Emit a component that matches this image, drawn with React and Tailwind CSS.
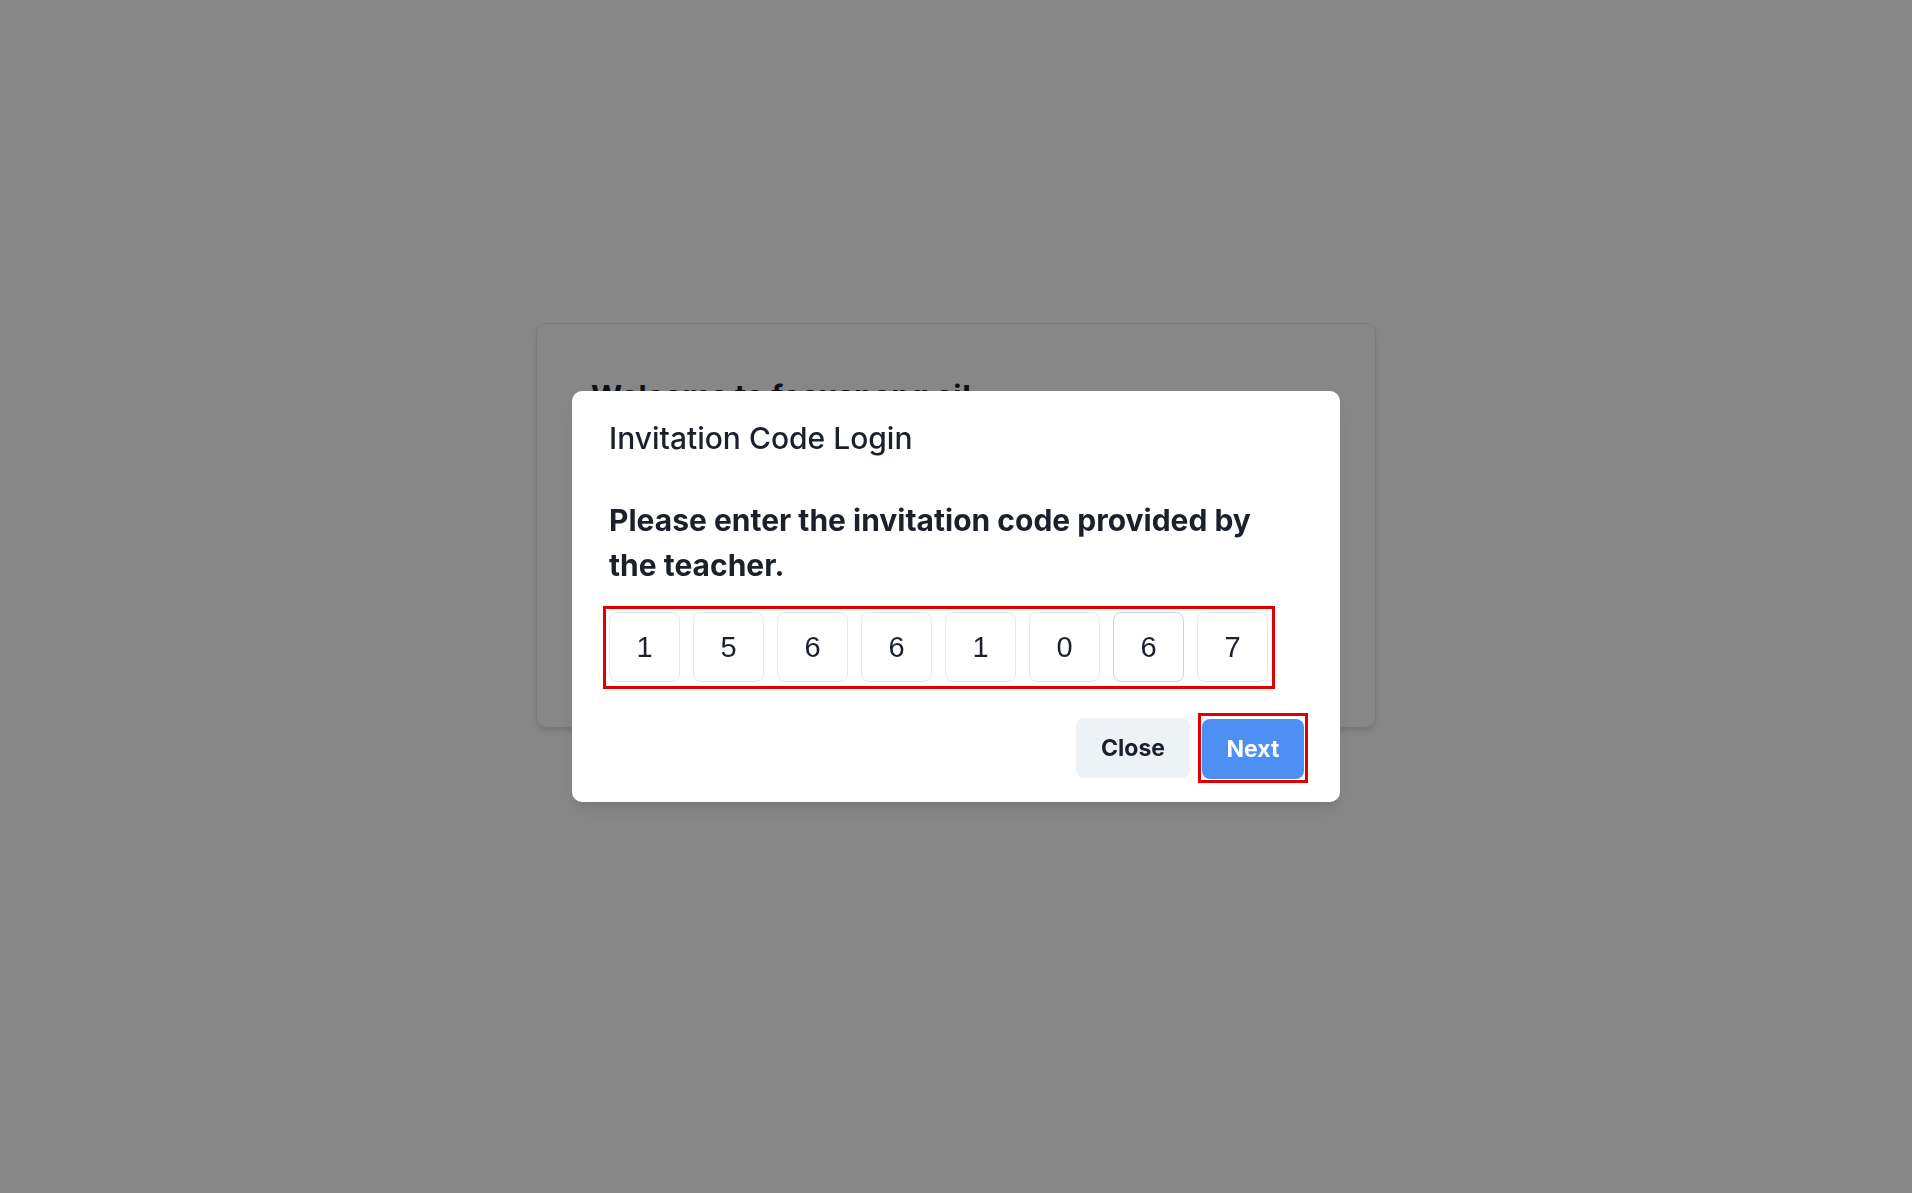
import React, { useState } from 'react';

const CODE = ['1', '5', '6', '6', '1', '0', '6', '7'];

const InvitationModal = () => {
  const [digits, setDigits] = useState(CODE);
  const focused = 6;

  const setDigit = (i, v) => {
    const next = [...digits];
    next[i] = v.slice(-1);
    setDigits(next);
  };

  return (
    <div className="fixed inset-0 z-10 flex items-center justify-center bg-black/[0.47]">
      <div className="w-[768px] rounded-[10px] bg-white pt-[29px] pl-[37px] pr-[36px] pb-[19px] shadow-lg">
        <h2 className="text-[30px] leading-[36px] font-medium text-[#1a202c]">Invitation Code Login</h2>

        <p className="mt-[42px] max-w-[660px] text-[30px] leading-[45px] font-bold text-[#1a202c]">
          Please enter the invitation code provided by the teacher.
        </p>

        {/* code inputs, red box is the annotation around them */}
        <div className="mt-[18px] ml-[-6px] inline-flex gap-[13px] border-[3px] border-[#e00000] pl-[3px] pr-[4px] pt-[3px] pb-[4px]">
          {digits.map((d, i) => (
            <input
              key={i}
              value={d}
              onChange={(e) => setDigit(i, e.target.value)}
              className={`h-[70px] w-[71px] rounded-[8px] border bg-white text-center text-[29px] text-[#1a202c] outline-none ${
                i === focused ? 'border-[#cbd5e0]' : 'border-[#e2e8f0]'
              }`}
              style={{ fontFamily: '"Liberation Sans", Arial, sans-serif' }}
            />
          ))}
        </div>

        <div className="mt-[24px] mr-[-4px] flex items-center justify-end gap-[8px]">
          <button className="h-[60px] w-[114px] rounded-[8px] bg-[#edf2f7] text-[23px] font-bold text-[#1a202c]">
            Close
          </button>
          <div className="border-[3px] border-[#e00000] pt-[3px] px-[1px] pb-[1px]">
            <button className="h-[60px] w-[102px] rounded-[8px] bg-[#4e8ff4] text-[23px] font-bold text-white">
              Next
            </button>
          </div>
        </div>
      </div>
    </div>
  );
};

export default function App() {
  return (
    <div
      className="min-h-screen bg-white flex justify-center pt-[323px]"
      style={{ fontFamily: 'Inter, "Noto Sans", sans-serif' }}
    >
      <div className="h-[405px] w-[840px] rounded-[10px] border border-gray-200 bg-white p-[54px] shadow-md">
        <h1 className="text-[30px] leading-[36px] font-bold text-[#1a202c]">Welcome to focusnong ai!</h1>
      </div>
      <InvitationModal />
    </div>
  );
}
